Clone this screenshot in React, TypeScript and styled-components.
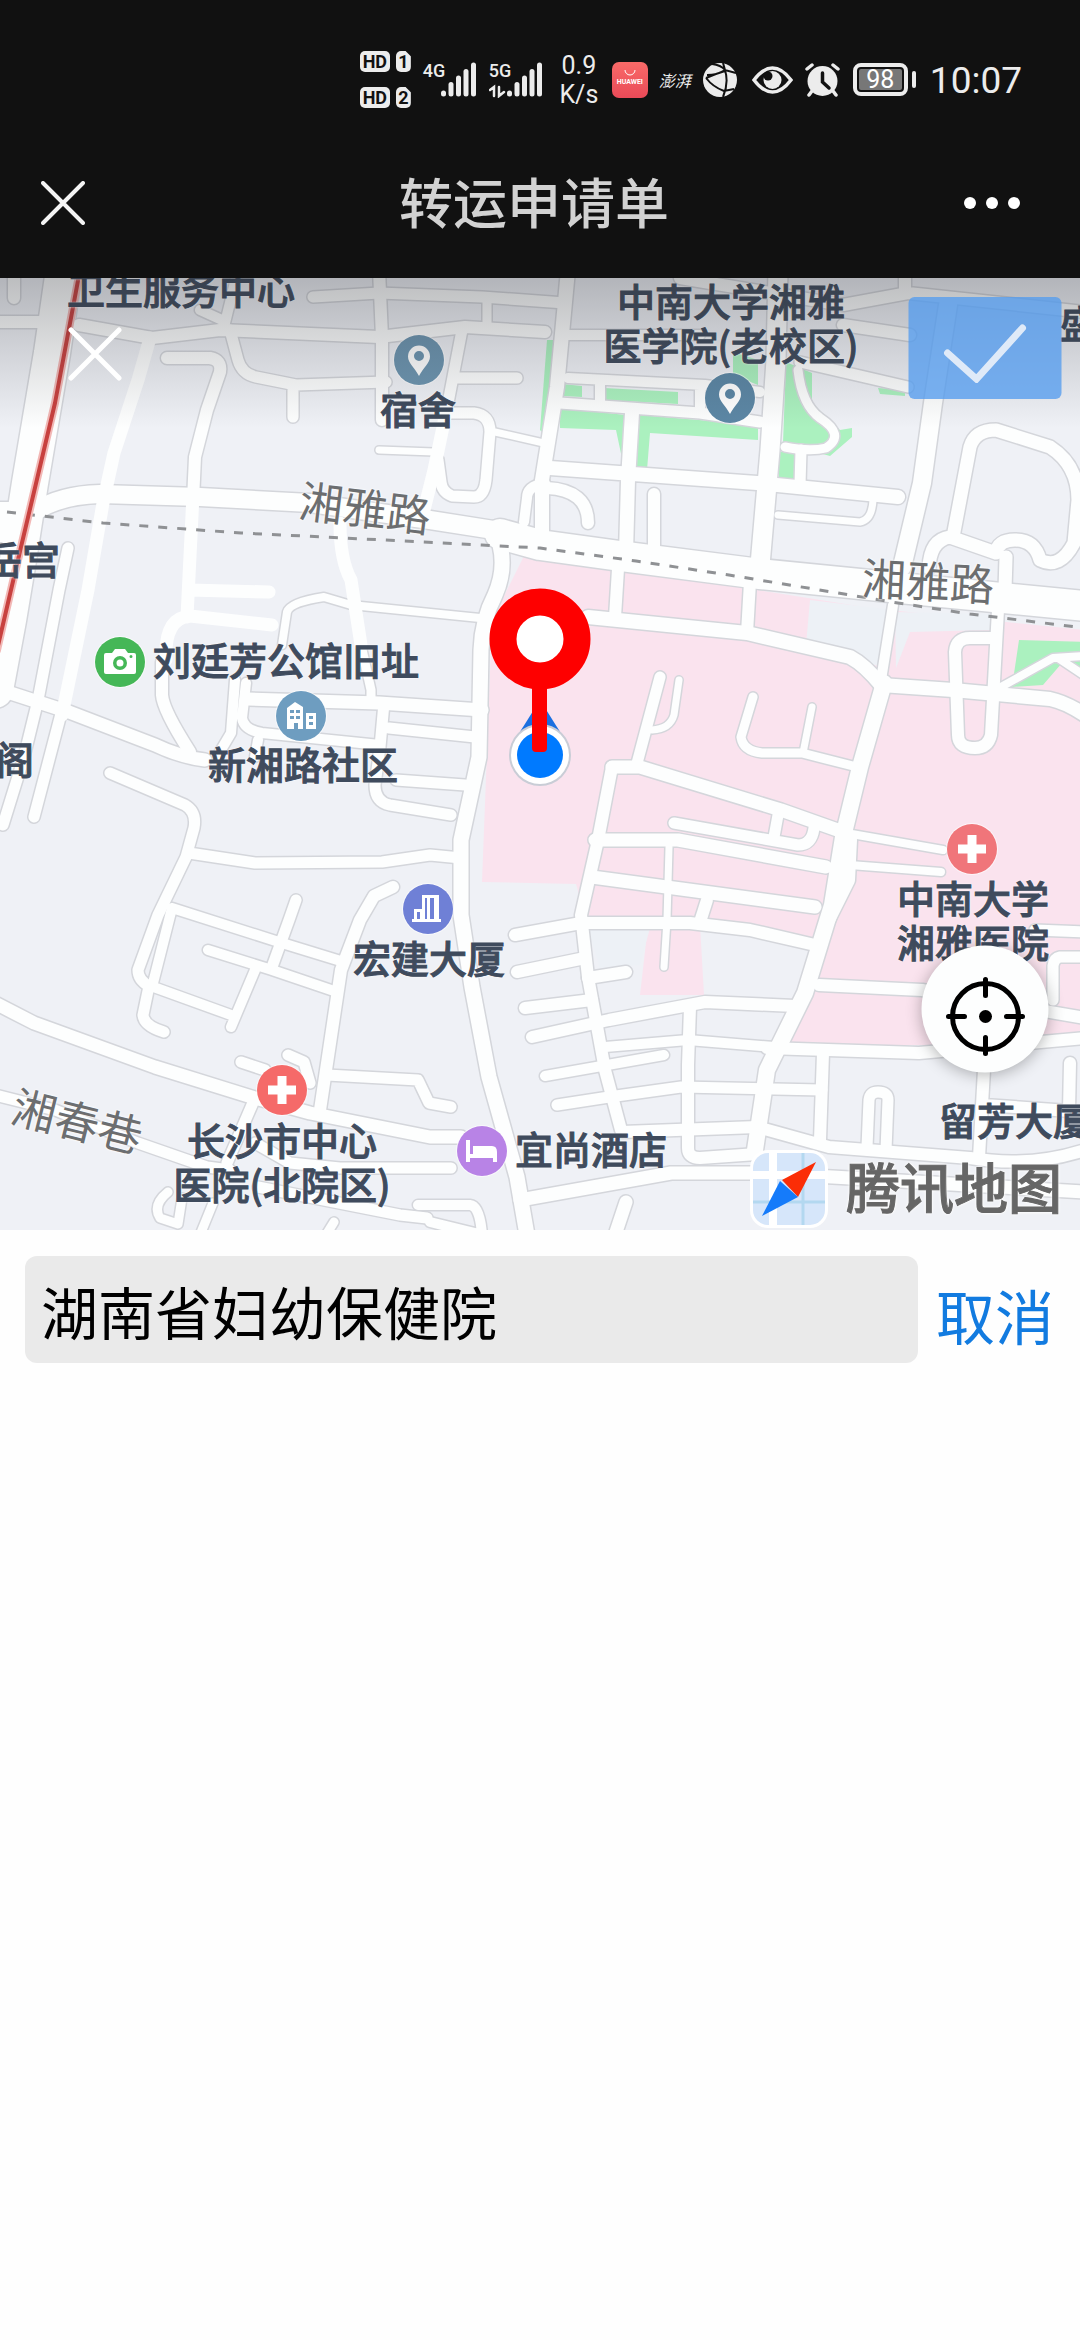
import React from 'react';
import styled, { createGlobalStyle } from 'styled-components';

const GlobalStyle = createGlobalStyle`
  * { box-sizing: border-box; }
  body {
    margin: 0;
    background: #fefefe;
    font-family: Roboto, "Noto Sans CJK SC", sans-serif;
  }
  button { border: 0; padding: 0; background: none; font: inherit; cursor: pointer; }
  svg { display: block; flex: none; }
`;

const MAP_W = 1080;
const MAP_H = 952;
const MAP_TOP = 278;

const Page = styled.main`
  display: flex;
  flex-direction: column;
  min-height: 100vh;
`;

const Top = styled.header`
  background: #111;
  color: #ececec;
`;

const StatusBar = styled.div`
  display: flex;
  align-items: center;
  justify-content: flex-end;
  height: 128px;
  padding: 31px 58px 0 0;
`;

const Stack = styled.div`
  display: flex;
  flex-direction: column;
  gap: 15px;
  margin-right: 12px;
`;

const SimRow = styled.div`
  display: flex;
  gap: 6px;
`;

const Chip = styled.span<{ $cut?: boolean }>`
  width: ${(p) => (p.$cut ? 15 : 30)}px;
  height: 21px;
  border-radius: 5px;
  background: #ececec;
  color: #111;
  font-size: 18px;
  font-weight: 700;
  line-height: 21px;
  text-align: center;
  ${(p) => p.$cut && 'clip-path: polygon(0 0, 65% 0, 100% 25%, 100% 100%, 0 100%);'}
`;

const Signal = styled.div`
  position: relative;
  width: 54px;
  height: 36px;
  margin-right: 12px;
`;

const SignalLabel = styled.span`
  position: absolute;
  top: 0;
  left: 0;
  font-size: 18px;
  font-weight: 500;
  line-height: 18px;
`;

const Speed = styled.div`
  width: 40px;
  margin: 0 13px 0 4px;
  font-size: 25px;
  line-height: 29px;
  text-align: center;
  white-space: nowrap;
`;

const AppBadge = styled.div`
  display: flex;
  flex-direction: column;
  align-items: center;
  width: 36px;
  height: 36px;
  margin-right: 11px;
  padding-top: 8px;
  border-radius: 7px;
  background: linear-gradient(#f96a68, #ea4a58);
  color: #fff;
  font-size: 7px;
  font-weight: 700;
  line-height: 12px;
`;

const Brush = styled.span`
  margin-right: 12px;
  font-size: 16px;
  font-style: italic;
  white-space: nowrap;
`;

const StatusIcon = styled.svg<{ $gap: number }>`
  margin-right: ${(p) => p.$gap}px;
`;

const Battery = styled.div`
  display: flex;
  align-items: center;
  gap: 4px;
  margin-right: 14px;
  &::after {
    content: '';
    width: 4px;
    height: 17px;
    border-radius: 2px;
    background: #ececec;
  }
`;

const BatteryBody = styled.div`
  width: 55px;
  height: 33px;
  padding: 2px;
  border: 4px solid #ececec;
  border-radius: 8px;
`;

const BatteryFill = styled.div`
  height: 21px;
  border-radius: 2px;
  background: #777;
  color: #fff;
  font-size: 25px;
  line-height: 22px;
  text-align: center;
`;

const Clock = styled.time`
  padding-top: 2px;
  font-size: 37px;
  line-height: 40px;
`;

const TitleBar = styled.div`
  display: flex;
  align-items: center;
  justify-content: space-between;
  height: 150px;
  padding: 0 59px 0 41px;
`;

const BarButton = styled.button<{ $w: number }>`
  display: flex;
  width: ${(p) => p.$w}px;
`;

const Title = styled.h1`
  margin: 0;
  padding-top: 6px;
  color: #d2d2d2;
  font-size: 54px;
  font-weight: 500;
  line-height: 80px;
`;

const MapArea = styled.section`
  position: relative;
  width: 100%;
  aspect-ratio: ${MAP_W} / ${MAP_H};
  overflow: hidden;
  background: #eff1f6;
`;

const MapSvg = styled.svg`
  width: 100%;
  height: 100%;
`;

const Shade = styled.div`
  position: absolute;
  inset: 0 0 auto;
  height: 150px;
  background: linear-gradient(rgba(40, 42, 48, 0.3), rgba(40, 42, 48, 0.16) 45%, rgba(40, 42, 48, 0));
  pointer-events: none;
`;

const Spot = styled.div<{ $x: number; $y: number }>`
  position: absolute;
  left: ${(p) => (p.$x / MAP_W) * 100}%;
  top: ${(p) => ((p.$y - MAP_TOP) / MAP_H) * 100}%;
  transform: translate(-50%, -50%);
`;

const Place = styled(Spot)`
  padding-bottom: 6px;
  color: #3f4b5d;
  font-family: "Noto Sans CJK SC", sans-serif;
  font-size: 38px;
  font-weight: 500;
  line-height: 44px;
  text-align: center;
  white-space: pre;
  -webkit-text-stroke: 1px #3f4b5d;
  text-shadow: 0 0 2px #fff, 0 0 3px #fff;
`;

const Street = styled(Spot)<{ $angle: number }>`
  transform: translate(-50%, -50%) rotate(${(p) => p.$angle}deg);
  color: #6c6e70;
  font-size: 44px;
  line-height: 48px;
  white-space: nowrap;
  text-shadow: 0 0 2px #fff, 0 0 3px #fff;
`;

const Brand = styled(Spot)`
  display: flex;
  align-items: center;
  gap: 18px;
  color: #666;
  font-size: 54px;
  font-weight: 500;
  line-height: 76px;
  white-space: nowrap;
  -webkit-text-stroke: 1px #666;
  text-shadow: 0 0 3px #fff, 0 0 3px #fff, 0 0 4px #fff;
`;

const BrandName = styled.span`
  padding-top: 4px;
`;

const MapClose = styled(Spot)`
  display: flex;
`;

const Confirm = styled(Spot)`
  display: flex;
  align-items: center;
  justify-content: center;
  width: 153px;
  height: 102px;
  padding-top: 10px;
  border-radius: 6px;
  background: rgba(84, 156, 238, 0.78);
`;

const Locate = styled(Spot)`
  display: flex;
  align-items: center;
  justify-content: center;
  width: 127px;
  height: 127px;
  padding-top: 14px;
  border-radius: 50%;
  background: #fdfefe;
  box-shadow: 0 2px 16px rgba(0, 0, 0, 0.3);
`;

const SearchRow = styled.form`
  display: flex;
  align-items: center;
  gap: 18px;
  padding: 26px 26px 0 25px;
`;

const SearchInput = styled.input`
  flex: 1;
  min-width: 0;
  height: 107px;
  padding: 0 16px;
  border: 0;
  border-radius: 12px;
  outline: 0;
  background: #eaeaea;
  color: #000;
  font-family: inherit;
  font-size: 57px;
`;

const Cancel = styled.button`
  padding-top: 20px;
  color: #127be0;
  font-size: 59px;
  line-height: 80px;
  white-space: nowrap;
`;

type Road = [number, string];

const roads: Road[] = [
  [36, 'M64 270L52 353L30 483L18 560L8 620L-5 690'],
  [12, 'M-5 322H40M14 270V298'],
  [12, 'M79 325L152 338L220 330L379 337L465 327L545 332'],
  [10, 'M238 270L224 327M200 310L222 320'],
  [12, 'M379 270L382 337V420'],
  [11, 'M313 297L379 293L482 297L565 303'],
  [9, 'M487 300V325'],
  [11, 'M230 330L238 360Q242 374 256 377L296 385L386 382M293 387V417'],
  [12, 'M167 358H210Q222 360 220 372L207 410L195 457L193 500'],
  [18, 'M34 512Q60 495 100 494L200 497L310 503L430 520L500 531'],
  [30, 'M500 534L540 545L620 556L760 574L900 588L1085 606'],
  [20, 'M-5 512H12V532H-5'],
  [11, 'M462 330L448 403M458 378H517'],
  [11, 'M448 413H474Q490 415 490 432L486 480Q484 497 474 497L452 496Q442 492 441 482L438 460'],
  [7, 'M495 432L548 444M379 450L434 452'],
  [10, 'M545 483Q527 486 527 498L524 522'],
  [15, 'M500 545Q506 570 495 595Q482 620 481 650L479 757L461 840V915L472 987L489 1077L517 1177L527 1235'],
  [11, 'M68 548L59 590L38 700L24 757L3 825'],
  [11, 'M62 710L34 817'],
  [13, 'M-5 688L69 712L155 745Q180 757 205 760'],
  [12, 'M162 662V695Q163 710 190 752'],
  [8, 'M282 645L287 612Q290 602 324 597L351 605L480 618'],
  [9, 'M361 645L371 690V703'],
  [10, 'M235 680L231 733L218 755M246 683L242 718Q244 730 262 733L380 745M258 740L255 757'],
  [13, 'M248 699L379 703L482 710'],
  [11, 'M384 703L380 747L375 785Q375 802 390 805L451 815M389 728L475 737M396 780L465 785'],
  [11, 'M110 773L185 805Q197 812 194 828L186 857L158 915L138 970Q138 980 149 986L143 1015Q144 1026 164 1032'],
  [11, 'M189 853L255 863L382 862L430 855L461 858'],
  [11, 'M296 900L289 920L272 967'],
  [12, 'M393 887L374 896L360 920L341 970L320 1110'],
  [10, 'M172 908L152 987M172 908L282 943L344 962M208 950L272 970L337 992M148 985L231 1015M255 970L231 1027'],
  [13, 'M-5 1003L34 1023L155 1067L255 1098L310 1113L430 1137H461'],
  [11, 'M241 1062L265 1070M288 1055L304 1062L310 1083'],
  [11, 'M327 1075L418 1080L429 1103L451 1107'],
  [11, 'M-5 1095L55 1110L138 1143L207 1167L230 1170M258 1187L400 1215L427 1218'],
  [11, 'M255 1098L227 1163M255 1143L290 1163L340 1168H451'],
  [10, 'M418 1205H470Q480 1206 482 1235M430 1222L475 1233'],
  [9, 'M168 1192Q152 1205 160 1218L178 1224L182 1198M213 1203L200 1235M326 1235L334 1222'],
  [12, 'M612 767L598 840L581 915L588 977L605 1070L621 1130'],
  [12, 'M515 935L581 923H690L750 930L815 945M517 972L585 958M588 978L626 972M525 1008L592 1000'],
  [12, 'M532 1037L609 1020L705 1002L795 1006'],
  [10, 'M545 1076L664 1055M605 1047L688 1040L774 1047'],
  [12, 'M767 1048L919 1053L1085 1038'],
  [11, 'M557 1105L609 1097L681 1087L822 1090'],
  [12, 'M690 1007L688 1065V1148Q688 1158 700 1158L757 1154'],
  [12, 'M622 1132L757 1127L829 1147L970 1158Q1030 1168 1085 1150'],
  [16, 'M884 683L860 767L843 837L832 905L805 993L767 1070L755 1150'],
  [14, 'M850 840L848 880L828 920'],
  [12, 'M823 1053L820 1140M819 985L922 990L1085 1018'],
  [13, 'M520 1200L671 1173H760L850 1178L1085 1192'],
  [13, 'M626 1202L615 1235'],
  [11, 'M867 1147L869 1100Q870 1092 878 1092Q888 1092 888 1100L886 1150'],
  [12, 'M984 1070L979 1157M1070 1063L1069 1110M984 1105L1085 1112'],
  [11, 'M1085 957H1060Q1054 958 1053 966V1000M1035 930L1085 932'],
  [14, 'M588 617L747 633L850 657Q865 665 881 685L953 690L1050 699Q1065 702 1085 715'],
  [12, 'M619 553L615 617M751 565L747 633'],
  [10, 'M893 605L881 680'],
  [12, 'M998 610L991 735Q988 748 975 748Q958 748 958 735L955 652Q956 638 970 638H995'],
  [8, 'M1001 687L1053 658L1085 656M1058 658L1085 676'],
  [11, 'M660 677L636 767'],
  [7, 'M679 680L674 715Q670 729 652 730M812 707L803 753'],
  [9, 'M753 697L741 737Q743 751 762 753H802L857 767'],
  [13, 'M612 767H640L781 810L846 833'],
  [8, 'M846 833L943 850M850 865L941 872'],
  [11, 'M674 823L798 845Q812 845 814 828M778 815L774 837'],
  [13, 'M595 840H678L826 867M592 877L815 907'],
  [7, 'M669 847L667 920L664 967'],
  [12, 'M707 900L700 922'],
  [14, 'M568 270L557 387L542 480V545'],
  [10, 'M568 335L700 335M568 378L705 385L760 392M700 390V410M600 384V404'],
  [11, 'M560 403L700 413L760 422'],
  [14, 'M632 413L628 480L626 553M550 468L757 483L898 497'],
  [19, 'M778 270L776 360L770 450L760 565'],
  [12, 'M547 488Q588 490 588 523M654 494V548'],
  [7, 'M778 515L860 522Q872 520 873 500'],
  [9, 'M798 370Q802 405 820 418Q846 435 826 448Q810 452 785 447'],
  [11, 'M801 450L800 485M800 362L908 387'],
  [12, 'M680 278L843 305L908 293L1085 312M905 270V290M843 325L910 335'],
  [18, 'M948 305L933 403L922 483L902 567'],
  [13, 'M953 537L970 447Q975 430 996 430L1050 447Q1078 465 1078 500L1074 543Q1060 570 1040 560Q1035 540 1015 540Q998 540 996 553L950 537Q930 540 929 568M1006 557L1005 590'],
];

const softRoads: Road[] = [
  [13, 'M150 338L138 380L114 453L103 503L88 590L62 715'],
  [13, 'M193 495L187 617M166 660Q164 618 190 616L272 625M189 590L269 592'],
  [13, 'M448 403L434 470L424 510M340 523Q340 560 351 580L361 645'],
];

const pink =
  'M524 556L545 558L620 568L808 598L870 608L1085 630V1045H786L812 950L700 925L704 995H640L648 925H588L576 884L482 882L492 620Z';
const pale = ['M810 600L893 610L885 668L806 645Z', 'M895 612L990 614V630L910 632L896 668Z', 'M588 928H650L640 965L600 968Z'];
const green = [
  'M547 340H557L545 435L540 430Z',
  'M562 384L582 386V397L562 396Z',
  'M604 388L678 392V404L604 400Z',
  'M560 408L626 415L623 463L616 430L560 428Z',
  'M640 415L758 425V440L650 433L647 470L635 468Z',
  'M733 352L758 360V385L733 375Z',
  'M786 362L812 373V403L840 430L852 428V437L830 456L783 443Z',
  'M779 452H795V483H779Z',
  'M878 388L905 390V396L880 394Z',
  'M1019 640L1085 642V678L1062 663L1043 685L1012 687Z',
];

const places = [
  { x: 181, y: 291, text: '卫生服务中心' },
  { x: 418, y: 411, text: '宿舍' },
  { x: 731, y: 325, text: '中南大学湘雅\n医学院(老校区)' },
  { x: 1079, y: 325, text: '盛' },
  { x: 22, y: 561, text: '岳宫' },
  { x: 286, y: 662, text: '刘廷芳公馆旧址' },
  { x: 303, y: 766, text: '新湘路社区' },
  { x: 15, y: 761, text: '阁' },
  { x: 429, y: 960, text: '宏建大厦' },
  { x: 973, y: 922, text: '中南大学\n湘雅医院' },
  { x: 282, y: 1164, text: '长沙市中心\n医院(北院区)' },
  { x: 591, y: 1151, text: '宜尚酒店' },
  { x: 1015, y: 1122, text: '留芳大厦' },
];

const streets = [
  { x: 365, y: 510, angle: 7, text: '湘雅路' },
  { x: 928, y: 583, angle: 3, text: '湘雅路' },
  { x: 77, y: 1123, angle: 14, text: '湘春巷' },
];

const glyphs: Record<string, React.ReactNode> = {
  pin: (
    <path fillRule="evenodd" d="M25 41C21 33 14 28 14 21.5a11 11 0 0 1 22 0C36 28 29 33 25 41ZM25 26a5 5 0 1 0 0-10a5 5 0 0 0 0 10Z" />
  ),
  camera: (
    <path fillRule="evenodd" d="M11 16h6l3-4h10l3 4h6q2 0 2 2v17q0 2-2 2H11q-2 0-2-2V18q0-2 2-2ZM25 33a7 7 0 1 0 0-14a7 7 0 0 0 0 14ZM25 29.5a3.5 3.5 0 1 0 0-7a3.5 3.5 0 0 0 0 7ZM36 18a1.5 1.5 0 1 0 0 3a1.5 1.5 0 0 0 0-3Z" />
  ),
  homes: (
    <path fillRule="evenodd" d="M11 38V17l8-6l8 5v22h-5v-6h-4v6ZM14 19v3h4v-3Zm6 0v3h4v-3Zm-6 6v3h4v-3Zm6 0v3h4v-3ZM30 22h10v16H30ZM33 25v3h4v-3Zm0 6v3h4v-3Z" />
  ),
  tower: (
    <path fillRule="evenodd" d="M9 38v-3h2V25h8V11h17v24h2v3ZM14 28v7h3v-7ZM22 14v21h2V14ZM27 14v21h4V14Z" />
  ),
  cross: <path d="M20.5 11h9v9.5H39v9h-9.5V39h-9v-9.5H11v-9h9.5Z" />,
  bed: <path d="M9 14h4v14h3v-8h19q5 0 5 6v10h-4v-4H13v4H9Z" />,
};

const markers = [
  { x: 419, y: 360, color: '#6d95b0', glyph: 'pin' },
  { x: 730, y: 398, color: '#5c87a5', glyph: 'pin' },
  { x: 120, y: 662, color: '#45b757', glyph: 'camera' },
  { x: 301, y: 716, color: '#6e9dc0', glyph: 'homes' },
  { x: 428, y: 909, color: '#6f80d6', glyph: 'tower' },
  { x: 972, y: 849, color: '#f0757a', glyph: 'cross' },
  { x: 282, y: 1090, color: '#f56a69', glyph: 'cross' },
  { x: 482, y: 1151, color: '#b883e6', glyph: 'bed' },
];

const bars = [0, 1, 2, 3, 4];

function SignalMeter({ label, arrows }: { label: string; arrows?: boolean }) {
  return (
    <Signal>
      <SignalLabel>{label}</SignalLabel>
      <svg width="54" height="36" viewBox="0 0 54 36" stroke="#ececec" strokeLinecap="round">
        {bars.map((b) => (
          <path key={b} strokeWidth="5" d={`M${20.5 + b * 7.5} 32V${b === 0 ? 31 : 29 - b * 6.5}`} />
        ))}
        {arrows && <path fill="none" strokeWidth="2.5" d="M1 28L5 25V34M10 25V34L15 30" />}
      </svg>
    </Signal>
  );
}

function RoadMap() {
  return (
    <MapSvg viewBox={`0 ${MAP_TOP} ${MAP_W} ${MAP_H}`} preserveAspectRatio="none" aria-hidden="true">
      <path d={pink} fill="#fae3ee" />
      {pale.map((d) => <path key={d} d={d} fill="#edf1f6" />)}
      {green.map((d) => <path key={d} d={d} fill="#abf1bf" />)}
      <g fill="none" strokeLinecap="round" strokeLinejoin="round">
        <g stroke="#d4d6db">
          {roads.map(([w, d]) => <path key={d} d={d} strokeWidth={w + 3} />)}
        </g>
        <g stroke="#fdfefe">
          {roads.map(([w, d]) => <path key={d} d={d} strokeWidth={w} />)}
          {softRoads.map(([w, d]) => <path key={d} d={d} strokeWidth={w} />)}
        </g>
        <path
          d="M7 512L103 523L241 533L344 538L482 545L540 548L636 561L729 575L850 595L898 603L970 614L1085 628"
          stroke="#8f9194"
          strokeWidth="3"
          strokeLinecap="butt"
          strokeDasharray="9 10"
        />
        <path d="M80 270L55 403L21 547L-3 650" stroke="#f2b8b6" strokeWidth="8" />
        <path d="M80 270L55 403L21 547L-3 650" stroke="#c8413f" strokeWidth="4" />
      </g>
    </MapSvg>
  );
}

export default function App() {
  return (
    <Page>
      <GlobalStyle />
      <Top>
        <StatusBar>
          <Stack>
            <SimRow><Chip>HD</Chip><Chip $cut>1</Chip></SimRow>
            <SimRow><Chip>HD</Chip><Chip $cut>2</Chip></SimRow>
          </Stack>
          <SignalMeter label="4G" />
          <SignalMeter label="5G" arrows />
          <Speed>0.9<br />K/s</Speed>
          <AppBadge>
            <svg width="12" height="6" viewBox="0 0 12 6" fill="none" stroke="#fff"><path d="M1 0a5 5 0 0 0 10 0" /></svg>
            HUAWEI
          </AppBadge>
          <Brush>澎湃</Brush>
          <StatusIcon $gap={15} width="34" height="34" viewBox="0 0 34 34">
            <circle cx="17" cy="17" r="17" fill="#ececec" />
            <path d="M9 1Q18 2 22 7Q26 20 20 34M20 0L22 7M4 12Q14 12 22 7L33 10M3 15Q10 24 21 28L31 26M3 15Q12 11 22 8" fill="none" stroke="#111" strokeWidth="2" />
          </StatusIcon>
          <StatusIcon $gap={12} width="41" height="28" viewBox="0 0 41 28">
            <path d="M2 14Q11 2 20.5 2T39 14Q30 26 20.5 26T2 14Z" fill="none" stroke="#ececec" strokeWidth="3.5" />
            <circle cx="20.5" cy="14" r="9" fill="#ececec" />
            <circle cx="16" cy="10" r="4.5" fill="#111" />
          </StatusIcon>
          <StatusIcon $gap={13} width="35" height="34" viewBox="0 0 35 34">
            <circle cx="17.5" cy="18" r="15" fill="#ececec" />
            <path d="M2 6L7 2M33 6L28 2M7 28L4 32M28 28L31 32" stroke="#ececec" strokeWidth="3.5" strokeLinecap="round" />
            <path d="M17.5 10V19L24 25" fill="none" stroke="#111" strokeWidth="3.5" strokeLinecap="round" />
          </StatusIcon>
          <Battery><BatteryBody><BatteryFill>98</BatteryFill></BatteryBody></Battery>
          <Clock>10:07</Clock>
        </StatusBar>
        <TitleBar>
          <BarButton $w={64} aria-label="关闭">
            <svg width="44" height="44" viewBox="0 0 44 44" stroke="#f4f4f4" strokeWidth="4" strokeLinecap="round">
              <path d="M2 2L42 42M42 2L2 42" />
            </svg>
          </BarButton>
          <Title>转运申请单</Title>
          <BarButton $w={58} aria-label="更多">
            <svg width="58" height="12" viewBox="0 0 58 12" fill="#fff">
              <circle cx="7" cy="6" r="6" /><circle cx="29" cy="6" r="6" /><circle cx="51" cy="6" r="6" />
            </svg>
          </BarButton>
        </TitleBar>
      </Top>

      <MapArea aria-label="地图">
        <RoadMap />
        {places.map((p) => <Place key={p.text} $x={p.x} $y={p.y}>{p.text}</Place>)}
        {streets.map((s) => <Street key={s.x} $x={s.x} $y={s.y} $angle={s.angle}>{s.text}</Street>)}
        {markers.map((m) => (
          <Spot key={m.x} $x={m.x} $y={m.y}>
            <svg width="54" height="54" viewBox="-2 -2 54 54">
              <circle cx="25" cy="25" r="26" fill="#fff" opacity="0.6" />
              <circle cx="25" cy="25" r="25" fill={m.color} />
              <g fill="#fff">{glyphs[m.glyph]}</g>
            </svg>
          </Spot>
        ))}
        <Shade />
        <Spot $x={540} $y={686}>
          <svg width="104" height="200" viewBox="488 586 104 200">
            <path d="M540 700L562 735H518Z" fill="#1a6fe0" />
            <circle cx="540" cy="755" r="31" fill="#c9cdd6" />
            <circle cx="540" cy="755" r="29" fill="#fff" />
            <circle cx="540" cy="755" r="23" fill="#007aff" />
            <rect x="532" y="670" width="15" height="82" rx="4" fill="#fe0000" />
            <circle cx="540" cy="639" r="37" fill="#fff" stroke="#fe0000" strokeWidth="27" />
          </svg>
        </Spot>
        <Brand $x={906} $y={1189}>
          <svg width="78" height="78" viewBox="0 0 78 78">
            <rect width="78" height="78" rx="18" fill="#fff" />
            <rect x="3" y="3" width="72" height="72" rx="15" fill="#d6e6fa" />
            <path d="M23 3V75M3 25H75" stroke="#fff" strokeWidth="8" />
            <path d="M53 3V75M3 52H75" stroke="#b3d8f0" strokeWidth="3" />
            <path d="M66 12L32 30L48 47Z" fill="#fb2d06" />
            <path d="M12 66L30 31L48 47Z" fill="#157bfa" />
          </svg>
          <BrandName>腾讯地图</BrandName>
        </Brand>
        <MapClose as="button" $x={95} $y={354} aria-label="关闭地图">
          <svg width="54" height="54" viewBox="0 0 54 54" stroke="#fff" strokeWidth="5" strokeLinecap="round">
            <path d="M3 3L51 51M51 3L3 51" />
          </svg>
        </MapClose>
        <Confirm as="button" $x={985} $y={348} aria-label="确定">
          <svg width="84" height="60" viewBox="0 0 84 60" fill="none" stroke="#dfeaf8" strokeWidth="7" strokeLinecap="round">
            <path d="M4 30L33 56L79 5" />
          </svg>
        </Confirm>
        <Locate as="button" $x={985} $y={1009} aria-label="定位">
          <svg width="82" height="82" viewBox="0 0 82 82" fill="none" stroke="#000" strokeWidth="5" strokeLinecap="round">
            <circle cx="41" cy="41" r="33" />
            <path d="M41 4V20M41 62V78M4 41H20M62 41H78" />
            <circle cx="41" cy="41" r="6.5" fill="#000" stroke="none" />
          </svg>
        </Locate>
      </MapArea>

      <SearchRow onSubmit={(e) => e.preventDefault()}>
        <SearchInput aria-label="搜索地点" defaultValue="湖南省妇幼保健院" />
        <Cancel type="button">取消</Cancel>
      </SearchRow>
    </Page>
  );
}
